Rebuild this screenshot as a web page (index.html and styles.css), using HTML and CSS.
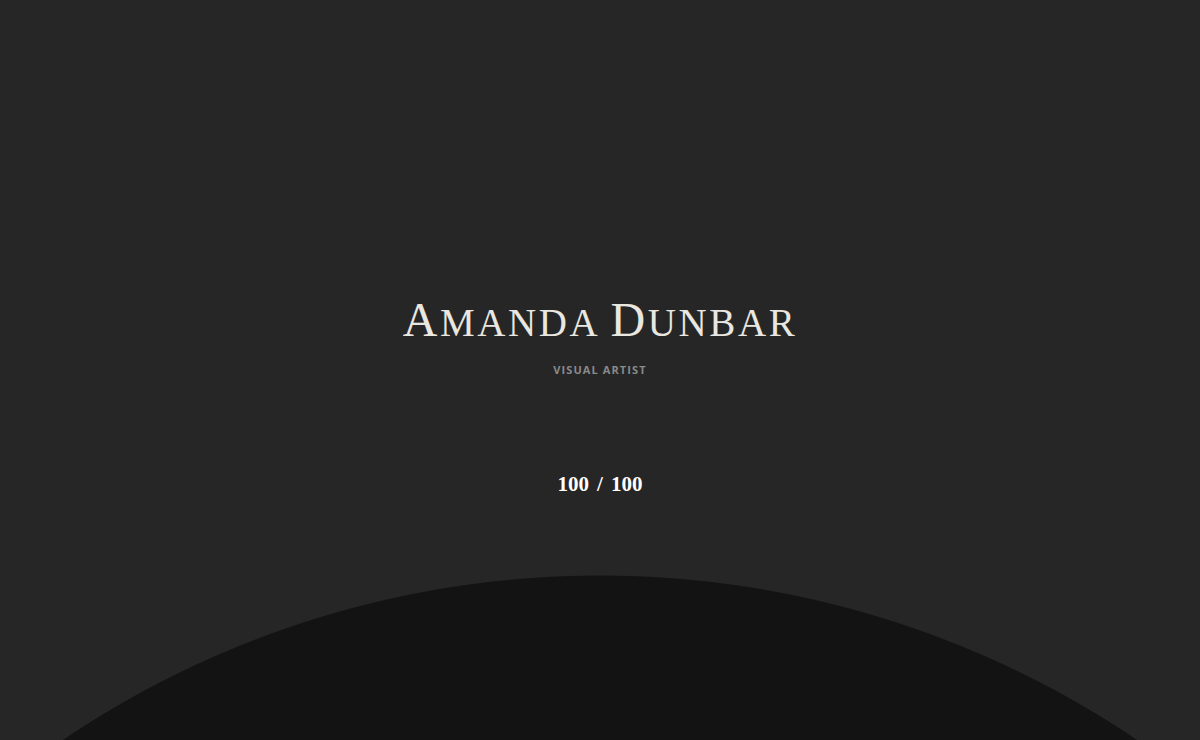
FILE: index.html
```html
<!DOCTYPE html>
<html lang="en">
<head>
<meta charset="utf-8">
<title>Amanda Dunbar — Visual Artist</title>
<link rel="stylesheet" href="styles.css">
</head>
<body>
<main class="intro">
  <h1 class="title"><span class="cap">A</span>manda <span class="cap">D</span>unbar</h1>
  <p class="subtitle">Visual Artist</p>
  <p class="counter"><span>100</span><span class="sep">/</span><span>100</span></p>
</main>
</body>
</html>
```
FILE: styles.css
```css
html, body {
  margin: 0;
  padding: 0;
  width: 100%;
  height: 100%;
}
body {
  background-color: #262626;
  background-image: radial-gradient(circle 960px at 50% 1535px, #131313 959px, rgba(19,19,19,0) 960px);
  background-repeat: no-repeat;
  overflow: hidden;
}
.intro {
  display: flex;
  flex-direction: column;
  align-items: center;
  padding-top: 294px;
}
.title {
  margin: 0;
  font-family: "Liberation Serif", "DejaVu Serif", serif;
  font-weight: 400;
  font-size: 39px;
  line-height: 52px;
  letter-spacing: 2.6px;
  text-transform: uppercase;
  color: #e9e7e0;
}
.cap {
  font-size: 48px;
}
.subtitle {
  margin: 14px 0 0;
  font-family: "Open Sans", "Liberation Sans", sans-serif;
  font-weight: 700;
  font-size: 11px;
  line-height: 14px;
  letter-spacing: 1.1px;
  text-transform: uppercase;
  color: #8a8a8a;
}
.counter {
  margin: 95px 0 0;
  display: flex;
  gap: 8px;
  font-family: "Liberation Serif", "DejaVu Serif", serif;
  font-weight: 700;
  font-size: 21px;
  line-height: 24px;
  color: #ffffff;
}
```
